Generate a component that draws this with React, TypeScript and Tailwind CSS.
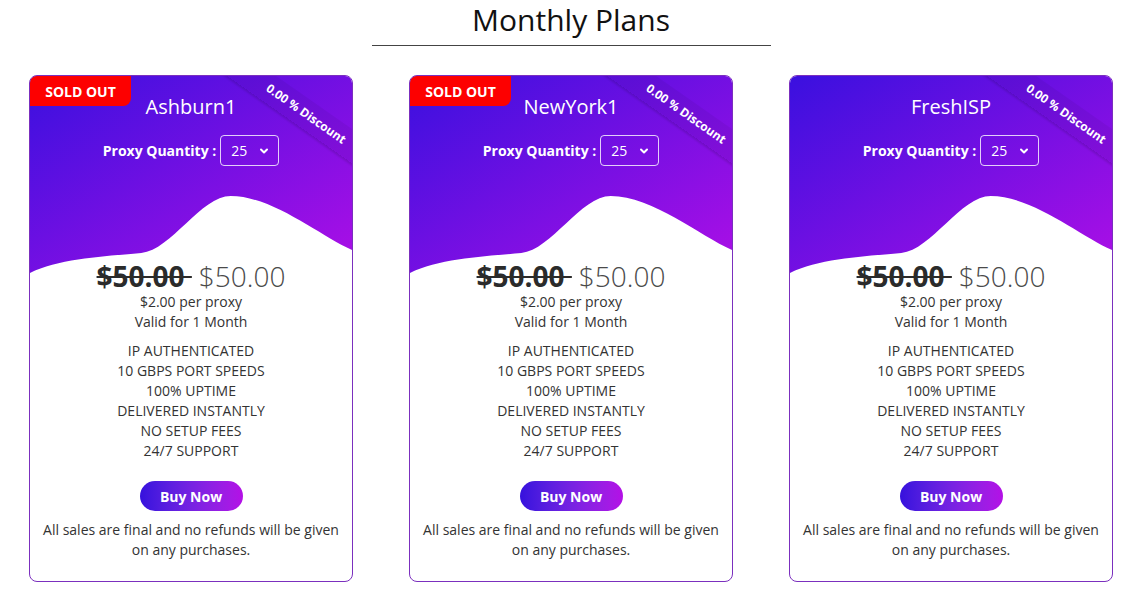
import { useState } from "react";

const PLANS = [
  { name: "Ashburn1", soldOut: true },
  { name: "NewYork1", soldOut: true },
  { name: "FreshISP", soldOut: false },
];

const FEATURES = [
  "IP AUTHENTICATED",
  "10 GBPS PORT SPEEDS",
  "100% UPTIME",
  "DELIVERED INSTANTLY",
  "NO SETUP FEES",
  "24/7 SUPPORT",
];

function Wave({ id }: { id: string }) {
  return (
    <svg
      className="absolute left-0 top-0 h-[200px] w-full"
      viewBox="0 0 324 200"
      preserveAspectRatio="none"
    >
      <defs>
        <linearGradient id={id} x1="0" y1="0" x2="1" y2="1">
          <stop offset="0" stopColor="#3a10df" />
          <stop offset="1" stopColor="#ad0fe6" />
        </linearGradient>
      </defs>
      <path
        d="M0,0 H324 V174 C292,160 244,120 202,120 C172,120 142,174 112,177 C80,180 30,182 0,197 Z"
        fill={`url(#${id})`}
      />
    </svg>
  );
}

function PlanCard({ name, soldOut, idx }: { name: string; soldOut: boolean; idx: number }) {
  const [qty, setQty] = useState("25");

  return (
    <div className="relative w-[324px] overflow-hidden rounded-lg border border-[#7b2fbe] bg-white">
      <Wave id={`grad-${idx}`} />

      {/* discount ribbon */}
      <div className="absolute left-[176px] top-[24px] flex h-[28px] w-[200px] rotate-[35deg] items-center justify-center bg-black/[0.05] shadow-[0_2px_2px_rgba(0,0,0,0.12)]">
        <span className="text-[12px] font-bold text-white">0.00 % Discount</span>
      </div>

      {soldOut && (
        <div className="absolute left-0 top-0 flex h-[30px] w-[101px] items-center justify-center rounded-br-lg bg-[#fd0000] text-[14px] font-bold text-white">
          SOLD OUT
        </div>
      )}

      <div className="relative flex flex-col items-center px-3 pb-[21px] pt-[17px] text-center">
        <h3 className="text-[20px] leading-[28px] text-white">{name}</h3>

        <div className="mt-[14px] flex h-[31px] items-center gap-[4px]">
          <span className="text-[14px] font-bold text-white">Proxy Quantity :</span>
          <div className="relative">
            <select
              value={qty}
              onChange={(e) => setQty(e.target.value)}
              className="h-[31px] w-[59px] appearance-none rounded border border-white/80 bg-transparent pl-[10px] text-[14px] text-white outline-none"
            >
              {["25", "50", "100", "250"].map((q) => (
                <option key={q} value={q} className="text-black">
                  {q}
                </option>
              ))}
            </select>
            <svg
              className="pointer-events-none absolute right-[10px] top-[12px] h-[8px] w-[10px]"
              viewBox="0 0 10 8"
              fill="none"
              stroke="white"
              strokeWidth="2"
              strokeLinecap="round"
              strokeLinejoin="round"
            >
              <path d="M2,2.5 L5,5.5 L8,2.5" />
            </svg>
          </div>
        </div>

        <div className="mt-[94px] text-[28px] leading-[32px]">
          <del className="font-bold text-[#2b2b2b]">$50.00 </del>
          <span className="ml-[7px] font-light text-[#4a4a4a]">$50.00</span>
        </div>
        <p className="text-[14px] leading-[20px] text-[#333]">$2.00 per proxy</p>
        <p className="text-[14px] leading-[20px] text-[#333]">Valid for 1 Month</p>

        <ul className="mt-[9px] text-[14px] leading-[20px] text-[#333]">
          {FEATURES.map((f) => (
            <li key={f}>{f}</li>
          ))}
        </ul>

        <button className="mt-[20px] h-[30px] w-[103px] rounded-full bg-gradient-to-r from-[#3610dd] to-[#b40fe6] text-[14px] font-bold text-white">
          Buy Now
        </button>

        <p className="mt-[9px] text-[14px] leading-[20px] text-[#333]">
          All sales are final and no refunds will be given on any purchases.
        </p>
      </div>
    </div>
  );
}

export default function App() {
  return (
    <div className="min-h-screen bg-white font-['Open_Sans',sans-serif]">
      <div className="flex flex-col items-center">
        <h1 className="text-[30px] leading-[40px] text-[#111]">Monthly Plans</h1>
        <div className="mt-[5px] w-[399px] border-t border-[#444]" />
      </div>
      <div className="mt-[29px] flex justify-center gap-[56px]">
        {PLANS.map((p, i) => (
          <PlanCard key={p.name} name={p.name} soldOut={p.soldOut} idx={i} />
        ))}
      </div>
    </div>
  );
}
